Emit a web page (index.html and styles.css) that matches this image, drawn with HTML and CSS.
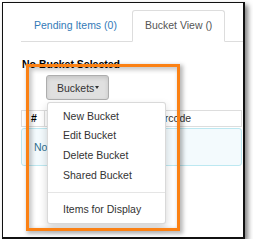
FILE: index.html
```html
<!DOCTYPE html>
<html lang="en">
<head>
    <meta charset="UTF-8">
    <meta name="viewport" content="width=device-width, initial-scale=1.0">
    <title>Bucket View</title>
    <link rel="stylesheet" href="styles.css">
</head>
<body>
    <div class="frame">
        <ul class="tabs">
            <li class="tab"><a href="#">Pending Items (0)</a></li>
            <li class="tab active"><a href="#">Bucket View ()</a></li>
        </ul>

        <h4 class="bucket-title">No Bucket Selected</h4>

        <div class="dropdown">
            <button class="btn-buckets" type="button">Buckets<span class="caret"></span></button>
            <ul class="dropdown-menu">
                <li><a href="#">New Bucket</a></li>
                <li><a href="#">Edit Bucket</a></li>
                <li><a href="#">Delete Bucket</a></li>
                <li><a href="#">Shared Bucket</a></li>
                <li class="divider"></li>
                <li><a href="#">Items for Display</a></li>
            </ul>
        </div>

        <div class="grid-header">
            <div class="cell cell-num">#</div>
            <div class="cell cell-wide"></div>
            <div class="cell cell-barcode">Barcode</div>
        </div>
        <div class="alert-info">No</div>

        <div class="highlight"></div>
    </div>
</body>
</html>
```

FILE: styles.css
```css
body {
    margin: 0;
    background-color: #fff;
    font-family: "Liberation Sans", Arial, sans-serif;
    font-size: 10.5px;
    line-height: 15px;
    color: #333;
}
.frame {
    position: relative;
    margin: 2px 0 0 2px;
    width: 240px;
    height: 234px;
    border: 1px solid #111;
    border-right-width: 2px;
    border-bottom-width: 2px;
    background-color: #fff;
    box-shadow: 3px 3px 5px rgba(0, 0, 0, 0.5);
    overflow: hidden;
}
.tabs {
    display: flex;
    list-style: none;
    margin: 7px 0 0 18px;
    padding: 0;
    border-bottom: 1px solid #ddd;
}
.tab {
    margin-bottom: -1px;
    margin-right: 2px;
}
.tab a {
    display: block;
    padding: 7px 12px 8px;
    border: 1px solid transparent;
    border-radius: 3px 3px 0 0;
    color: #337ab7;
    text-decoration: none;
}
.tab.active a {
    color: #555;
    background-color: #fff;
    border-color: #ddd #ddd transparent;
}
.bucket-title {
    margin: 15px 0 0 19px;
    font-size: 10.5px;
    font-weight: bold;
    color: #000;
}
.dropdown {
    position: relative;
    display: inline-block;
    margin: 3px 0 0 43px;
}
.btn-buckets {
    display: flex;
    align-items: center;
    height: 25px;
    padding: 0 9px 0 10px;
    font-family: inherit;
    font-size: 10.5px;
    color: #333;
    background-color: #e0e0e0;
    border: 1px solid #adadad;
    border-radius: 3px;
    box-shadow: inset 0 2px 4px rgba(0, 0, 0, 0.125);
}
.caret {
    width: 0;
    height: 0;
    margin-left: 1px;
    border-top: 3px solid #333;
    border-left: 2.5px solid transparent;
    border-right: 2.5px solid transparent;
}
.dropdown-menu {
    position: absolute;
    top: 27px;
    left: 1px;
    z-index: 2;
    width: 119px;
    box-sizing: border-box;
    list-style: none;
    margin: 0;
    padding: 3.5px 0;
    background-color: #fff;
    border: 1px solid rgba(0, 0, 0, 0.15);
    border-radius: 3px;
    box-shadow: 0 4px 9px rgba(0, 0, 0, 0.175);
}
.dropdown-menu a {
    display: block;
    padding: 2.3px 15px;
    color: #333;
    text-decoration: none;
    white-space: nowrap;
}
.divider {
    height: 1px;
    margin: 7px 0;
    background-color: #e5e5e5;
}
.grid-header {
    display: flex;
    height: 17px;
    margin: 10px 1px 0 18px;
    border: 1px solid #ddd;
    box-sizing: border-box;
}
.cell {
    display: flex;
    align-items: center;
    padding-left: 8px;
    box-sizing: border-box;
}
.cell-num {
    width: 23px;
    padding-left: 9px;
    font-weight: bold;
    color: #000;
    border-right: 1px solid #ddd;
}
.cell-wide {
    width: 99px;
    border-right: 1px solid #ddd;
}
.alert-info {
    height: 38px;
    margin: 1px 1px 0 18px;
    padding: 11px 12px;
    box-sizing: border-box;
    color: #31708f;
    background-color: #f3fafd;
    border: 1px solid #bce8f1;
    border-radius: 3px;
    white-space: nowrap;
}
.highlight {
    position: absolute;
    left: 23px;
    top: 61px;
    z-index: 3;
    width: 154px;
    height: 167px;
    box-sizing: border-box;
    border: 3px solid #fb8114;
    box-shadow: 2px 2px 4px 1px rgba(0, 0, 0, 0.28), inset 2px 2px 4px 1px rgba(0, 0, 0, 0.22);
}
```
